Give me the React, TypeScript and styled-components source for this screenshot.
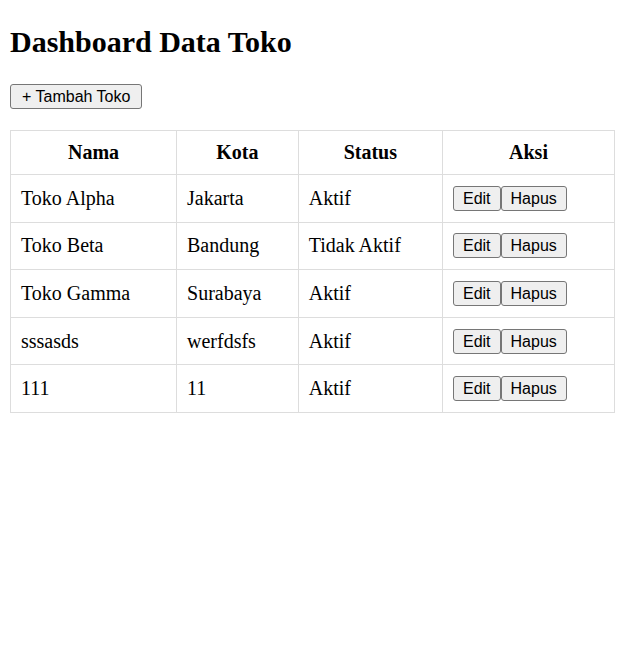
import styled, { createGlobalStyle } from "styled-components";

type Toko = { nama: string; kota: string; status: string };

const tokoList: Toko[] = [
  { nama: "Toko Alpha", kota: "Jakarta", status: "Aktif" },
  { nama: "Toko Beta", kota: "Bandung", status: "Tidak Aktif" },
  { nama: "Toko Gamma", kota: "Surabaya", status: "Aktif" },
  { nama: "sssasds", kota: "werfdsfs", status: "Aktif" },
  { nama: "111", kota: "11", status: "Aktif" },
];

const GlobalStyle = createGlobalStyle`
  body {
    margin: 0;
    background: #ffffff;
    color: #000000;
    font-family: "Liberation Serif", "Times New Roman", serif;
    font-size: 20px;
  }
`;

export default function App() {
  return (
    <Page>
      <GlobalStyle />
      <Title>Dashboard Data Toko</Title>
      <AddButton>+ Tambah Toko</AddButton>
      <Table>
        <thead>
          <tr>
            <Th>Nama</Th>
            <Th>Kota</Th>
            <Th>Status</Th>
            <Th>Aksi</Th>
          </tr>
        </thead>
        <tbody>
          {tokoList.map((toko, idx) => (
            <tr key={idx}>
              <Td>{toko.nama}</Td>
              <Td>{toko.kota}</Td>
              <Td>{toko.status}</Td>
              <Td>
                <Button>Edit</Button>
                <Button>Hapus</Button>
              </Td>
            </tr>
          ))}
        </tbody>
      </Table>
    </Page>
  );
}

const Page = styled.div`
  display: flex;
  flex-direction: column;
  align-items: flex-start;
  padding: 0 10px;
`;

const Title = styled.h1`
  font-size: 30px;
  line-height: 34px;
  font-weight: bold;
  margin: 25px 0 0;
`;

const Button = styled.button`
  font-family: "Liberation Sans", Arial, sans-serif;
  font-size: 16px;
  line-height: 19px;
  color: #000000;
  background-color: #efefef;
  border: 1px solid #767676;
  border-radius: 3px;
  padding: 2px 9px;
  cursor: pointer;

  &:hover {
    background-color: #e5e5e5;
  }
`;

const AddButton = styled(Button)`
  margin: 25px 0 21px;
  padding: 2px 11px;
`;

const Table = styled.table`
  align-self: stretch;
  border-collapse: collapse;
`;

const Th = styled.th`
  border: 1px solid #dddddd;
  padding: 10px;
  font-weight: bold;
  text-align: center;
`;

const Td = styled.td`
  border: 1px solid #dddddd;
  padding: 10.8px 10px;
  text-align: left;
`;
